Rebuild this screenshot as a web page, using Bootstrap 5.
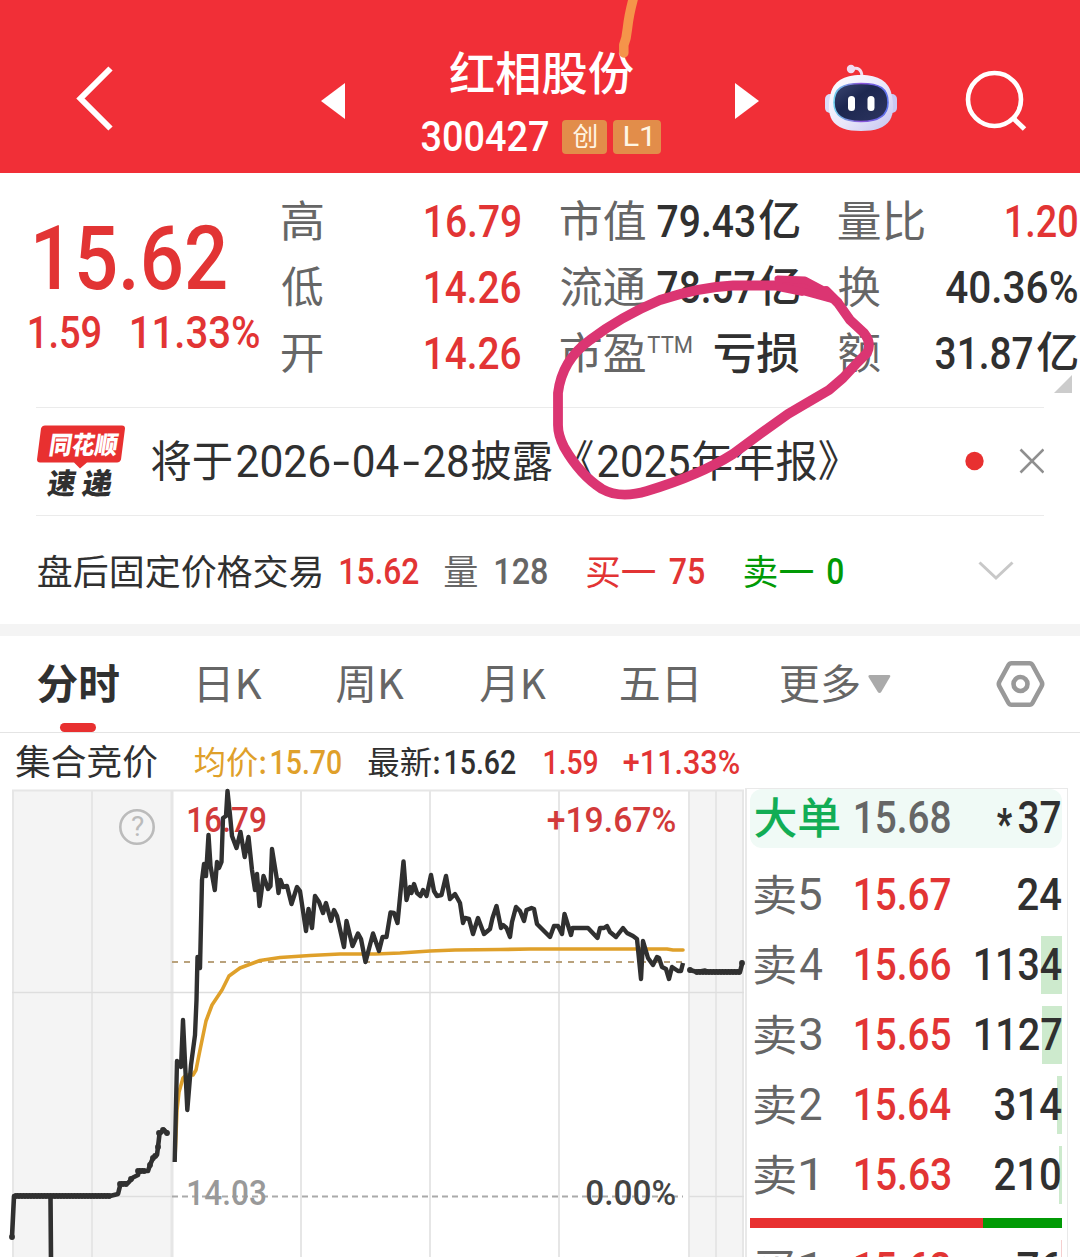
<!DOCTYPE html>
<html lang="zh-CN">
<head>
<meta charset="utf-8">
<meta name="viewport" content="width=device-width, initial-scale=1">
<title>红相股份 300427</title>
<link href="https://cdn.jsdelivr.net/npm/bootstrap@5.3.0/dist/css/bootstrap.min.css" rel="stylesheet">
<style>
:root{--up:#e23434;--ink:#303030;--dim:#666;--down:#019a05;--cjk:"Noto Sans CJK SC",sans-serif;--num:Roboto,"Noto Sans CJK SC",sans-serif}
body{width:1080px;height:1257px;overflow:hidden;background:#fff;color:var(--ink);font-family:var(--cjk)}
svg{display:block}
.fit{display:inline-block;height:1em;line-height:1;white-space:nowrap;flex:none}
.fit>span{display:inline-block;transform-origin:0 0;line-height:1}
.n{font-family:var(--num);font-weight:500;font-size:45px}
.c{font-family:var(--cjk);font-size:43px}
.c>span{position:relative;top:-.07em}
.up{color:var(--up)}.dim{color:var(--dim)}.down{color:var(--down)}
.topbar{height:173px;background:#f12f37;padding-left:74px;grid-template-columns:247px 100px 314px 90px 140px 1fr}
.title-col{width:240px;padding-top:50px}
.title-col .code-row{height:34px;margin-top:24px}
.tagbox{background:#e28d4a;color:#fff6e4;height:34px;border-radius:4px}
.quote{height:234px}
.price-col{width:281px;padding:41px 0 0 29px}
.figs{width:240px;margin-right:38.5px;padding-top:15.5px}
.figs .fig{height:66px}
.rule{height:1px;background:#ebebeb;margin:0 36px}
.news{height:107px;padding:0 36px 0 37px}
.after{height:108px;padding-left:37px;padding-top:4px;grid-template-columns:303px 104px 51px 91px 83px 75px 83px 152px 1fr}
.after .n{font-size:36.5px}.after .c{font-size:35.5px}
.band{height:12px;background:#f4f4f4}
.tabsbar{height:97px;border-bottom:1px solid #e4e4e4;padding-left:37px;grid-template-columns:162px 137px 143px 141px 160px 89px 127px 1fr}
.tabsbar .c{font-size:41px}
.tabsbar .c>span{top:-.05em}
.tabsbar .on::after{content:"";position:absolute;left:23px;top:59px;width:36px;height:9px;border-radius:5px;background:#e83030}
.info{height:53px;padding:6px 0 0 15px;grid-template-columns:179px 77px 97px 77px 99px 79px 1fr}
.info .n{font-size:33px}.info .c{font-size:32px}
.avg{color:#dfa02a}
.book{width:323px;height:480px;margin-top:2px;border:1px solid #e9e9e9;border-left-width:2px;padding:0 5px 0 3px}
.lvl{height:58px;margin-bottom:12px;padding-left:4px}
.lvl .n>span{position:relative;top:-1px}
.lvl .pr{left:105px;top:0;height:58px}
.lvl .bg{right:0;top:0;height:58px;background:#cdeacd}
.lvl.deal{background:#f0faf6;border-radius:12px;height:59px;margin-bottom:18px}
.ratio{height:10px;margin-top:14px;margin-bottom:12px;background:#019a05}
.lvl.last{margin-bottom:0}
.ratio div{background:#e83030}
.thin{font-weight:400}
</style>
<script src="https://cdn.jsdelivr.net/npm/bootstrap@5.3.0/dist/js/bootstrap.bundle.min.js"></script>
</head>
<body class="position-relative">

<header class="topbar d-grid">
  <svg width="44" height="173" fill="none" stroke="#fff" stroke-width="6"><path d="M36.500 68.500 6.500 98.500 36.500 128.500"/></svg>
  <svg width="25" height="173"><path d="M24 83v36L0 101z" fill="#fff"/></svg>
  <div class="title-col d-flex flex-column align-items-center text-white">
    <span class="fit c" data-w="185" style="font-size:46px;font-weight:500">红相股份</span>
    <div class="code-row d-flex align-items-center w-100">
      <span class="fit n" data-w="128" style="font-size:42px">300427</span>
      <span class="tagbox d-flex align-items-center justify-content-center" style="width:45px;margin-left:13px"><span class="fit c" data-w="25" style="font-size:26px">创</span></span>
      <span class="tagbox d-flex align-items-center justify-content-center" style="width:48px;margin-left:6px"><span class="fit n thin" data-w="27" style="font-size:28px">L1</span></span>
    </div>
  </div>
  <svg width="25" height="173"><path d="M0 83v36l24-18z" fill="#fff"/></svg>
  <svg width="74" height="173">
    <defs>
      <linearGradient id="shell" x1="0" y1="0" x2="1" y2="1"><stop offset="0" stop-color="#fff"/><stop offset=".55" stop-color="#e9e6fa"/><stop offset="1" stop-color="#c3c3ef"/></linearGradient>
      <linearGradient id="visor" x1="0" y1="0" x2="1" y2="1"><stop offset="0" stop-color="#3b4672"/><stop offset=".4" stop-color="#1d2750"/><stop offset="1" stop-color="#2d3560"/></linearGradient>
      <linearGradient id="rim" x1="0" y1="0" x2="1" y2="0"><stop offset="0" stop-color="#6fd0ee"/><stop offset=".5" stop-color="#8a50d8"/><stop offset="1" stop-color="#5a74ee"/></linearGradient>
    </defs>
    <path d="M27 69q9-3 10 7" fill="none" stroke="#f3dff0" stroke-width="3"/><circle cx="26" cy="69" r="4.200" fill="#f0dcf2"/>
    <rect x="0" y="94" width="12" height="19" rx="5" fill="#dcdcf8"/><rect x="60" y="94" width="12" height="19" rx="5" fill="#c9c9f3"/>
    <path d="M36 75c18 0 27 7 30 17 3 12 3 21-1 28-5 8-15 11-29 11s-24-3-29-11c-4-7-4-16-1-28 3-10 12-17 30-17z" fill="url(#shell)"/>
    <path d="M36 83.500c19 0 27 5 27 19 0 13-9 19-27 19s-27-6-27-19c0-14 8-19 27-19z" fill="url(#visor)" stroke="url(#rim)" stroke-width="1.600"/>
    <rect x="23" y="96" width="7" height="15" rx="3.500" fill="#fff"/><rect x="42.500" y="96" width="7" height="15" rx="3.500" fill="#fff"/>
  </svg>
  <svg width="64" height="173" fill="none" stroke="#fff" stroke-width="4.600"><circle cx="29.500" cy="99.500" r="26.500"/><path d="M48 118l11.500 11" stroke-width="5"/></svg>
</header>

<section class="quote d-flex position-relative">
  <div class="price-col">
    <span class="fit n up d-block" data-w="191" style="font-size:89px;margin-left:6px">15.62</span>
    <div class="d-flex" style="margin-top:7px"><span class="fit n up" data-w="72">1.59</span><span class="fit n up" data-w="129" style="margin-left:30px">11.33%</span></div>
  </div>
  <div class="figs">
    <div class="fig d-flex align-items-center justify-content-between"><span class="fit c dim" data-w="42">高</span><span class="fit n up" data-w="96">16.79</span></div>
    <div class="fig d-flex align-items-center justify-content-between"><span class="fit c dim" data-w="42">低</span><span class="fit n up" data-w="96">14.26</span></div>
    <div class="fig d-flex align-items-center justify-content-between"><span class="fit c dim" data-w="42">开</span><span class="fit n up" data-w="96">14.26</span></div>
  </div>
  <div class="figs">
    <div class="fig d-flex align-items-center justify-content-between"><span class="fit c dim" data-w="86">市值</span><span class="d-flex" style="gap:3px"><span class="fit n" data-w="98">79.43</span><span class="fit c" style="font-weight:500" data-w="42">亿</span></span></div>
    <div class="fig d-flex align-items-center justify-content-between"><span class="fit c dim" data-w="86">流通</span><span class="d-flex" style="gap:3px"><span class="fit n" data-w="98">78.57</span><span class="fit c" style="font-weight:500" data-w="42">亿</span></span></div>
    <div class="fig d-flex align-items-center justify-content-between"><span class="d-flex"><span class="fit c dim" data-w="86">市盈</span><span class="fit n dim thin" data-w="45" style="font-size:24px;margin:1px 0 0 1px">TTM</span></span><span class="fit c" data-w="86" style="font-weight:500">亏损</span></div>
  </div>
  <div class="figs me-0">
    <div class="fig d-flex align-items-center justify-content-between"><span class="fit c dim" data-w="87">量比</span><span class="fit n up" data-w="72">1.20</span></div>
    <div class="fig d-flex align-items-center justify-content-between"><span class="fit c dim" data-w="43">换</span><span class="fit n" data-w="133">40.36%</span></div>
    <div class="fig d-flex align-items-center justify-content-between"><span class="fit c dim" data-w="43">额</span><span class="d-flex" style="gap:3px"><span class="fit n" data-w="98">31.87</span><span class="fit c" style="font-weight:500" data-w="42">亿</span></span></div>
  </div>
  <svg class="position-absolute" width="18" height="18" style="right:8px;bottom:14px"><path d="M18 0v18H0z" fill="#ccc"/></svg>
</section>
<div class="rule"></div>

<section class="news d-flex align-items-center">
  <svg class="overflow-visible" width="89" height="74" viewBox="37 424.500 89 74">
    <path d="M45 425h77q3 0 3 3l-4 31q-1 3-4 3H87l-7 6-6-6H40q-3 0-3-3l4-31q1-3 4-3z" fill="#e83030"/>
    <g transform="translate(80 0) skewX(-9)" style="font-family:var(--cjk)" font-weight="900">
      <text data-x="40.500" data-w="68" y="453.500" font-size="25" fill="#fff">同花顺</text>
      <text data-x="44" data-w="29" y="494" font-size="29" fill="#303030">速</text><text data-x="79" data-w="31" y="494" font-size="29" fill="#303030">递</text>
    </g>
  </svg>
  <div class="d-flex align-items-center" style="margin-left:25px"><span class="fit c" data-w="81">将于</span><span class="fit n thin" data-w="94" style="margin-left:3.500px">2026</span><span class="fit n thin" data-w="17" style="margin-left:3px">-</span><span class="fit n thin" data-w="46.500" style="margin-left:3.500px">04</span><span class="fit n thin" data-w="17" style="margin-left:3px">-</span><span class="fit n thin" data-w="45.500" style="margin-left:3.500px">28</span><span class="fit c" data-w="82" style="margin-left:2px">披露</span><span class="fit c" data-w="20" style="margin-left:21.500px">《</span><span class="fit n thin" data-w="93" style="margin-left:3px">2025</span><span class="fit c" data-w="147" style="margin-left:1.500px">年年报》</span></div>
  <svg class="ms-auto" width="79" height="26" style="margin-top:-1px"><circle cx="9.500" cy="13" r="9.200" fill="#e83030"/><path d="M55.500 1.500l23 23M78.500 1.500l-23 23" stroke="#8f8f8f" stroke-width="2.600"/></svg>
</section>
<div class="rule"></div>

<section class="after d-grid align-items-center">
  <span class="fit c" data-w="285">盘后固定价格交易</span><span class="fit n up" data-w="79">15.62</span>
  <span class="fit c dim" data-w="34">量</span><span class="fit n dim" data-w="53">128</span>
  <span class="fit c up" data-w="70">买一</span><span class="fit n up" data-w="36">75</span>
  <span class="fit c down" data-w="70">卖一</span><span class="fit n down" data-w="17">0</span>
  <svg width="36" height="20" style="margin:-3px 0 0 -1px"><path d="M1.500 1.500 18 17 34.500 1.500" fill="none" stroke="#c8c8c8" stroke-width="3"/></svg>
</section>
<div class="band"></div>

<nav class="tabsbar d-grid align-items-center">
  <span class="fit c fw-bold on position-relative" data-w="83">分时</span><span class="fit c dim" data-w="64">日K</span><span class="fit c dim" data-w="69">周K</span><span class="fit c dim" data-w="68">月K</span><span class="fit c dim" data-w="77">五日</span><span class="fit c dim" data-w="80">更多</span>
  <svg width="24" height="20" style="margin-left:-1px"><path d="M2 1h19q2 0 1 2l-8.500 14.500q-2 3-4 0L.5 3Q0 1 2 1z" fill="#aaa"/></svg>
  <svg width="49" height="48" fill="none" stroke="#999" stroke-width="4.600"><path d="M15.500 3.200h18q2 0 3 1.800l9 16.500q1.400 2.500 0 5l-9 16.500q-1 1.800-3 1.800h-18q-2 0-3-1.800l-9-16.500q-1.400-2.500 0-5l9-16.500q1-1.800 3-1.800z"/><circle cx="24.500" cy="24" r="7"/></svg>
</nav>

<div class="info d-grid align-items-center">
  <span class="fit c" data-w="143" style="font-size:35.500px">集合竞价</span>
  <span class="fit c avg" data-w="72">均价:</span><span class="fit n avg" data-w="71">15.70</span>
  <span class="fit c" data-w="72">最新:</span><span class="fit n" data-w="71">15.62</span>
  <span class="fit n up" data-w="54">1.59</span><span class="fit n up" data-w="117">+11.33%</span>
</div>

<main class="d-flex">
  <svg width="745" height="471" viewBox="0 786 745 471" style="flex:none;font-family:var(--num)">
    <path d="M12 790h160v470H12zM689 790h55v470h-55z" fill="#f4f4f4"/>
    <path d="M12 790.500h732M13 790v470M92 790v470M301 790v470M430 790v470M559 790v470M689 790v470M716 790v470M743 790v470" stroke="#e6e6e6" stroke-width="2" fill="none"/>
    <path d="M172 790v470" stroke="#e6e6e6" stroke-width="3"/>
    <path d="M12 992.500h732M12 1196.500h160M689 1196.500h55" stroke="#dedede" stroke-width="1.300"/>
    <path d="M172 962H683" stroke="#b9a27c" stroke-width="2" stroke-dasharray="6 6"/>
    <path d="M172 1196.500H683" stroke="#aaa" stroke-width="2" stroke-dasharray="6 4"/>
    <circle cx="137" cy="827" r="16.700" fill="none" stroke="#bbb" stroke-width="2.600"/>
    <text data-x="131" data-w="13" y="836.500" font-size="27" fill="#bbb">?</text>
    <g font-size="35.500" font-weight="500">
      <text data-x="188" data-w="78" y="832" fill="#d23a3a">16.79</text>
      <text data-x="547" data-w="129" y="832" fill="#d23a3a">+19.67%</text>
      <text data-x="188" data-w="78" y="1205" fill="#999">14.03</text>
      <text data-x="586" data-w="90" y="1205" fill="#444">0.00%</text>
    </g>
    <g fill="none" stroke-linejoin="round" stroke-linecap="round">
      <path stroke="#dfa02a" stroke-width="3.600" d="M175 1158 177 1110 179 1092 183 1078 186 1075 193 1075 196 1070 200 1050 206 1021 212 1005 222 990 229 976 240 968 260 960.500 280 957.500 310 955.500 340 954 375 954 400 953 430 951 455 950 500 949.500 530 949 667 949 673 950 683 950"/>
      <g stroke="#303030">
      <path stroke-width="4.400" stroke-linecap="butt" d="M174.700 1162 177 1061 181 1067 183 1020 187.300 1110 191 1065 195 1035 196.500 1000 197.500 957 200 968 202 880 204 864 206 876 208.500 835 210.500 866 214.800 890 217 862 219 868 221.500 862 223 818 226 816 227.500 791 230 815 232 836 236.500 848 240.500 832 244.700 857 248.500 837 252 870 255 890 257 874 259.500 906 263.500 876 268 889 270.500 886 272 849 277 880 278.500 893 280.500 880 283 887 287 886 291.500 904 297 887 300 891 306 931 308.500 909 312 928 315 896 319 902 323 913 326 903 331 921 334 910 337 916 344 947 346.500 921 352.500 946 358 933.500 361 939 365.500 962 373 933.500 379 951 382.500 937 386.500 937 390.500 912.500 394 913 397.500 923 403.500 861.500 406.500 900 410 887 411.500 893 414 884 417 893 420.500 896 423 890 426.500 896 431 875 434 891 437 896 441.500 895 446 876 450 899 455 894 460 903 463 923 465 918 469 919 473 934 478 918 484 934 490 929 492.500 918 496.500 906 501 928 503 925 506.500 928 510 937 512 922 516 907 520 911 524 921 526.500 910 531.500 908 534 909 537 924 543 930 550 937 554 926 558 926 562 934 564.500 914 571 935 572.500 928 588 928 597.500 938 600 928 604 928 607 926 610 932 616 937 623 928 627 933 633 936 637 939 641 979 643 941 648 958 653 965 657 957 659 958 662 967 666 969 669 979 672 967 678 971 681 971 683 963"/>
      <path stroke-width="4.600" d="M12 1237 14 1196H110L118 1194 120.500 1184 128 1183 133 1177.500 138 1175 139 1171H148L150 1165 153 1158 157 1155 158 1147 159.500 1134 164 1130 167 1133M50.500 1196 51 1260"/>
      <path stroke-width="5.800" stroke-dasharray="0 3" d="M16 1196H112M120 1184h7M131 1179h2M138 1171h9M150 1165h1M153 1158l3-3M158 1147v.1M159 1133h2M163 1130h3M167 1133v.1M690 970h3M697 972h43M742 963v.1M12 1237v.1"/>
      <path stroke-width="4.600" d="M690 970 697 972 705 970.500 708 972H740L742 964"/>
      </g>
    </g>
  </svg>
  <div class="book flex-shrink-0">
    <div class="lvl deal position-relative d-flex align-items-center"><span class="fit c" data-w="86" style="color:#12ad55;font-weight:500">大单</span><span class="pr position-absolute d-flex align-items-center"><span class="fit n dim" data-w="96">15.68</span></span><span class="ms-auto d-flex" style="padding-right:1px"><span class="fit n" data-w="17" style="margin-right:5px;font-size:42px;font-weight:900;position:relative;top:8px">*</span><span class="fit n" data-w="43">37</span></span></div>
    <div class="lvl position-relative d-flex align-items-center"><span class="fit c dim" data-w="42">卖</span><span class="fit n thin dim" data-w="23" style="margin-left:3px">5</span><span class="pr position-absolute d-flex align-items-center"><span class="fit n up" data-w="96">15.67</span></span><span class="fit n ms-auto position-relative" data-w="45">24</span></div>
    <div class="lvl position-relative d-flex align-items-center"><div class="bg position-absolute" style="width:21px"></div><span class="fit c dim" data-w="42">卖</span><span class="fit n thin dim" data-w="24" style="margin-left:3px">4</span><span class="pr position-absolute d-flex align-items-center"><span class="fit n up" data-w="96">15.66</span></span><span class="fit n ms-auto position-relative" data-w="87">1134</span></div>
    <div class="lvl position-relative d-flex align-items-center"><div class="bg position-absolute" style="width:20px"></div><span class="fit c dim" data-w="42">卖</span><span class="fit n thin dim" data-w="23" style="margin-left:3px">3</span><span class="pr position-absolute d-flex align-items-center"><span class="fit n up" data-w="96">15.65</span></span><span class="fit n ms-auto position-relative" data-w="87">1127</span></div>
    <div class="lvl position-relative d-flex align-items-center"><div class="bg position-absolute" style="width:5px"></div><span class="fit c dim" data-w="42">卖</span><span class="fit n thin dim" data-w="23" style="margin-left:3px">2</span><span class="pr position-absolute d-flex align-items-center"><span class="fit n up" data-w="96">15.64</span></span><span class="fit n ms-auto position-relative" data-w="68">314</span></div>
    <div class="lvl last position-relative d-flex align-items-center"><div class="bg position-absolute" style="width:3px"></div><span class="fit c dim" data-w="42">卖</span><span class="fit n thin dim" data-w="16" style="margin-left:4px">1</span><span class="pr position-absolute d-flex align-items-center"><span class="fit n up" data-w="96">15.63</span></span><span class="fit n ms-auto position-relative" data-w="67" style="margin-right:1px">210</span></div>
    <div class="ratio d-flex"><div style="width:74.600%"></div></div>
    <div class="lvl position-relative d-flex align-items-center"><div class="bg position-absolute" style="width:1px;background:#f5cfcf"></div><span class="fit c dim" data-w="40">买</span><span class="fit n thin dim" data-w="16" style="margin-left:6px">1</span><span class="pr position-absolute d-flex align-items-center"><span class="fit n up" data-w="96">15.62</span></span><span class="fit n ms-auto position-relative" data-w="45">76</span></div>
  </div>
</main>

<!-- hand-drawn marks lying over the page -->
<svg class="position-absolute top-0 start-0 pe-none" width="1080" height="520" fill="none" stroke-linecap="round" stroke-linejoin="round">
  <path d="M634-4Q629 14 627.500 28L626 38 623.800 45V53" stroke="#f5944a" stroke-width="9.500"/>
  <path d="M826 291 838 303 850 320 864 333Q872 343 867 353L858 362 843 378 829 390 805 404 788 414 760 434 733 454Q700 475 647 491 620 499 602 489 580 475 564 447 558 435 558 425V393Q562 360 590 340 620 317 660 300 700 287 733 285.500H775L802 291" stroke="#db3572" stroke-width="9.800"/>
  <path d="M778 279 805 280 822 289 838 301 805 292 779 286Z" fill="#db3572" stroke="#db3572" stroke-width="7"/>
</svg>

<script>
// Condense each label so that its drawn glyphs span data-w pixels, less a hair on each side.
// Measured at ten times the size, because glyph bounds come back rounded.
const ctx = document.createElement('canvas').getContext('2d');
const HAIR = 0.8;
function inkOf(el, text) {
  const s = getComputedStyle(el);
  ctx.font = `${s.fontWeight} ${parseFloat(s.fontSize) * 10}px ${s.fontFamily}`;
  const m = ctx.measureText(text);
  return {left: -m.actualBoundingBoxLeft / 10, width: (m.actualBoundingBoxRight + m.actualBoundingBoxLeft) / 10};
}
document.querySelectorAll('.fit').forEach(el => {
  const text = el.textContent, w = +el.dataset.w, ink = inkOf(el, text), k = (w - 2 * HAIR) / ink.width;
  const inner = document.createElement('span');
  inner.textContent = text;
  el.textContent = '';
  el.append(inner);
  el.style.width = w + 'px';
  inner.style.transform = `translateX(${HAIR - ink.left * k}px) scaleX(${k})`;
});
document.querySelectorAll('text[data-w]').forEach(el => {
  const ink = inkOf(el, el.textContent), k = (el.dataset.w - 2 * HAIR) / ink.width;
  el.setAttribute('transform', `translate(${+el.dataset.x + HAIR - ink.left * k} 0) scale(${k} 1)`);
});
</script>
</body>
</html>
